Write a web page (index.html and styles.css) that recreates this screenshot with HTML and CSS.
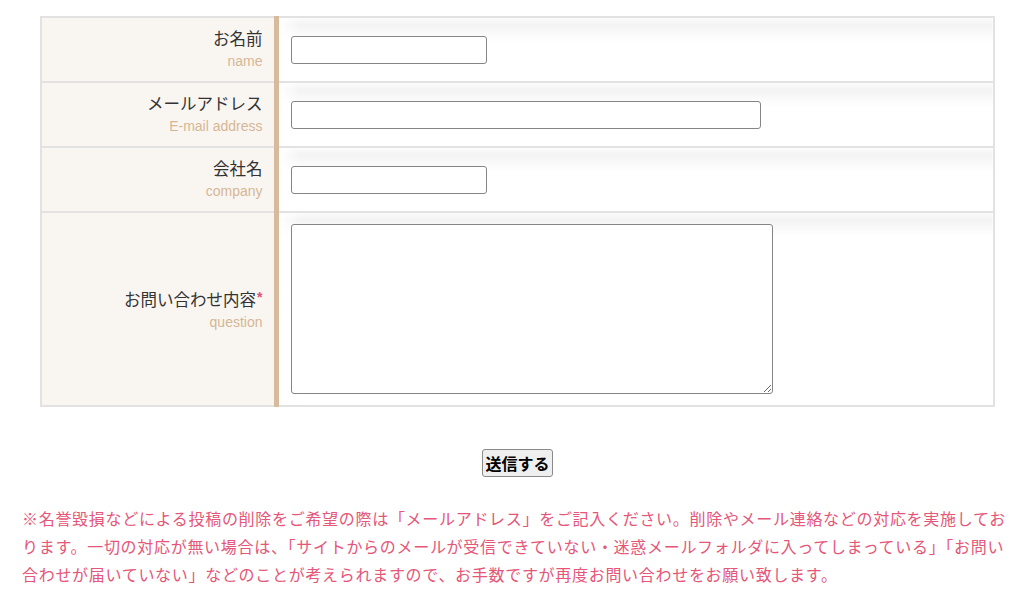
FILE: index.html
```html
<!DOCTYPE html>
<html lang="ja">
<head>
<meta charset="utf-8">
<title>お問い合わせ</title>
<link rel="stylesheet" href="styles.css">
</head>
<body>
<div class="wrap">
  <form class="contact">
    <table class="form-table">
      <tr>
        <th><span class="label">お名前</span><span class="sub">name</span></th>
        <td><input type="text" class="field short"></td>
      </tr>
      <tr>
        <th><span class="label">メールアドレス</span><span class="sub">E-mail address</span></th>
        <td><input type="text" class="field long"></td>
      </tr>
      <tr>
        <th><span class="label">会社名</span><span class="sub">company</span></th>
        <td><input type="text" class="field short"></td>
      </tr>
      <tr class="tall">
        <th><span class="label">お問い合わせ内容<span class="req">*</span></span><span class="sub">question</span></th>
        <td><textarea class="area"></textarea></td>
      </tr>
    </table>
    <div class="actions">
      <button type="button" class="submit">送信する</button>
    </div>
  </form>
  <p class="notice">※名誉毀損などによる投稿の削除をご希望の際は「メールアドレス」をご記入ください。削除やメール連絡などの対応を実施しております。一切の対応が無い場合は、「サイトからのメールが受信できていない・迷惑メールフォルダに入ってしまっている」「お問い合わせが届いていない」などのことが考えられますので、お手数ですが再度お問い合わせをお願い致します。</p>
</div>
</body>
</html>
```
FILE: styles.css
```css
* { box-sizing: border-box; }
html, body { margin: 0; padding: 0; background: #fff; }
body {
  font-family: "Liberation Sans", "Noto Sans CJK JP", sans-serif;
  color: #333;
}
.wrap {
  width: 991px;
  margin-left: 22px;
  padding-top: 16px;
}
.form-table {
  width: 955px;
  margin: 0 18px;
  border-collapse: collapse;
  border: 2px solid #e2e2e2;
}
.form-table tr { border-top: 2px solid #e2e2e2; }
.form-table th {
  width: 235px;
  background: #f9f6f2;
  border-right: 5px solid #d8bb9d;
  padding: 9px 11px 10px 0;
  text-align: right;
  vertical-align: middle;
  font-weight: normal;
}
.form-table td {
  padding: 10px 12px;
  vertical-align: middle;
  background:
    linear-gradient(to right, #fff 0, rgba(255,255,255,0) 22px),
    linear-gradient(to bottom, #fbfbfb 0, #f3f3f3 7px, #fff 24px);
}
.form-table .tall td { padding: 11px 12px; }
.label {
  display: block;
  font-size: 16.5px;
  line-height: 25px;
  color: #333;
}
.sub {
  display: block;
  font-size: 14px;
  line-height: 19px;
  color: #d6b695;
}
.req {
  color: #e2506f;
  font-size: 14px;
  font-weight: bold;
  vertical-align: 4px;
  margin-left: 1px;
}
.field {
  display: block;
  height: 28px;
  border: 1px solid #858585;
  border-radius: 3px;
  background: #fff;
  padding: 2px 6px;
  font-size: 14px;
}
.field.short { width: 196px; }
.field.long { width: 470px; }
.area {
  display: block;
  width: 482px;
  height: 170px;
  border: 1px solid #858585;
  border-radius: 3px;
  background: #fff;
  font-size: 14px;
}
.actions {
  display: flex;
  justify-content: center;
  padding-top: 42px;
}
.submit {
  height: 28px;
  padding: 1px 2px;
  font-family: "Liberation Sans", "Noto Sans CJK JP", sans-serif;
  font-size: 16px;
  font-weight: bold;
  color: #000;
  background: #efefef;
  border: 1px solid #8a8a8a;
  border-radius: 3px;
}
.notice {
  margin: 29px 0 0;
  font-size: 16px;
  line-height: 28px;
  letter-spacing: 0.7px;
  color: #e55678;
}
```
